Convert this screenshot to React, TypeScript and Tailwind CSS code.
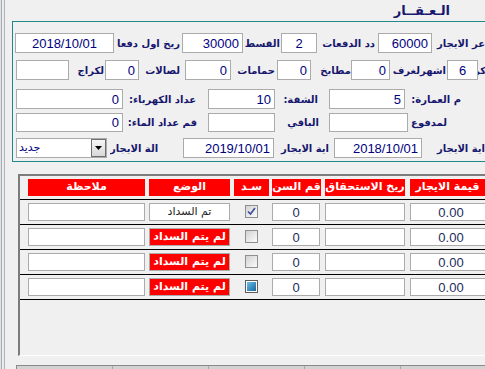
import React from "react";

type FieldProps = { className?: string; value?: string; align?: "right" | "center" };

const Field = ({ className = "", value = "", align = "right" }: FieldProps) => (
  <div
    className={`h-full shrink-0 bg-white border border-[#ababab] flex items-center text-[13px] leading-none text-[#000080] font-['Liberation_Sans',sans-serif] ${
      align === "center" ? "justify-center" : "justify-end pr-[3px]"
    } ${className}`}
  >
    {value}
  </div>
);

const Label = ({ className = "", text }: { className?: string; text: string }) => (
  <div
    dir="rtl"
    className={`h-full shrink-0 overflow-hidden whitespace-nowrap flex items-center text-[10px] font-bold text-[#17176e] font-['DejaVu_Sans',sans-serif] ${className}`}
  >
    {text}
  </div>
);

const Check = ({ kind }: { kind: "checked" | "empty" | "blue" }) => {
  if (kind === "blue") {
    return (
      <div className="w-[13px] h-[13px] border border-[#5c5c5c] bg-white p-px shrink-0">
        <div className="w-full h-full bg-linear-to-br from-[#6cc0ee] to-[#17679c]" />
      </div>
    );
  }
  return (
    <div className="w-[13px] h-[13px] border border-[#8e8f8f] bg-linear-to-br from-[#d2d2d2] to-[#fbfbfb] shrink-0 flex items-center justify-center">
      {kind === "checked" && (
        <svg width="9" height="9" viewBox="0 0 9 9">
          <path d="M1 4.5 L3.5 7 L8 1" fill="none" stroke="#3a4c9c" strokeWidth="1.6" />
        </svg>
      )}
    </div>
  );
};

const rows: { status: "paid" | "unpaid"; check: "checked" | "empty" | "blue" }[] = [
  { status: "paid", check: "checked" },
  { status: "unpaid", check: "empty" },
  { status: "unpaid", check: "empty" },
  { status: "unpaid", check: "blue" },
];

export default function App() {
  return (
    <div className="w-[485px] h-[369px] overflow-hidden bg-[#f0f0f0] flex font-['Liberation_Sans','DejaVu_Sans',sans-serif]">
      {/* left window edge */}
      <div className="flex h-full shrink-0">
        <div className="w-px bg-[#e2e2e2]" />
        <div className="w-px bg-[#a6aab6]" />
        <div className="w-[2px] bg-[#ececec]" />
        <div className="w-px bg-[#aeb2be]" />
      </div>

      <div className="flex-1 min-w-0 flex flex-col">
        {/* title */}
        <div className="h-[21px] shrink-0 flex items-center justify-end pr-[35px]">
          <span dir="rtl" className="text-[13px] font-bold text-[#17176e] font-['DejaVu_Sans',sans-serif] leading-none">
            الـعـقــار
          </span>
        </div>

        {/* group box */}
        <div className="h-[141px] shrink-0 ml-[7px] border-l border-y border-[#21898a] flex flex-col">
          <div className="flex h-[20px] mt-[11px] ml-[2px]">
            <Field className="w-[99px]" value="2018/10/01" align="center" />
            <Label className="w-[63px] ml-[3px]" text="ريخ اول دفعا" />
            <Field className="w-[61px] ml-[2px]" value="30000" />
            <Label className="w-[36px] ml-px" text="القسط" />
            <Field className="w-[36px] ml-px" value="2" align="center" />
            <Label className="w-[56px] ml-[2px]" text="دد الدفعات" />
            <Field className="w-[54px] ml-[3px]" value="60000" />
            <Label className="flex-1 min-w-0 ml-px" text="عر الايجار" />
          </div>

          <div className="flex h-[20px] mt-[7px] ml-[3px]">
            <Field className="w-[53px]" />
            <Label className="w-[31px] ml-[4px]" text="لكراج" />
            <Field className="w-[34px] ml-px" value="0" />
            <Label className="w-[37px] ml-[4px]" text="لصالات" />
            <Field className="w-[46px] ml-[5px]" value="0" />
            <Label className="w-[43px] ml-px" text="حمامات" />
            <Field className="w-[34px] ml-[2px]" value="0" />
            <Label className="w-[37px] ml-[3px]" text="مطابخ" />
            <Field className="w-[39px]" value="0" />
            <Label className="w-[53px] ml-[3px]" text="اشهرلغرف" />
            <Field className="w-[31px] ml-px" value="6" align="center" />
            <Label className="w-[8px]" text="كر" />
          </div>

          <div className="flex h-[20px] mt-[9px] ml-[3px]">
            <Field className="w-[107px]" value="0" />
            <Label className="w-[71px] ml-[2px]" text="عداد الكهرباء:" />
            <Field className="w-[67px] ml-[12px]" value="10" />
            <Label className="w-[40px] ml-[3px]" text="الشقة:" />
            <Field className="w-[76px] ml-[11px]" value="5" />
            <Label className="flex-1 min-w-0 pr-[24px]" text="م العمارة:" />
          </div>

          <div className="flex h-[19px] mt-[4px] ml-[3px]">
            <Field className="w-[107px]" value="0" />
            <Label className="w-[71px] ml-[3px]" text="قم عداد الماء:" />
            <Field className="w-[67px] ml-[11px]" />
            <Label className="w-[41px] ml-[3px]" text="الباقي" />
            <Field className="w-[79px] ml-[10px]" />
            <Label className="w-[36px] ml-[3px]" text="لمدفوع" />
          </div>

          <div className="flex h-[20px] mt-[6px] ml-[3px]">
            <div className="w-[91px] h-full shrink-0 bg-white border border-[#ababab] flex items-center justify-between">
              <span className="pl-[2px] text-[11px] text-[#000080] font-['DejaVu_Sans',sans-serif]">جديد</span>
              <div className="w-[15px] h-full border border-[#6f6f6f] bg-linear-to-b from-[#f6f6f6] to-[#d8d8d8] flex items-center justify-center">
                <svg width="7" height="4" viewBox="0 0 7 4">
                  <path d="M0 0 H7 L3.5 4 Z" fill="#000" />
                </svg>
              </div>
            </div>
            <Label className="w-[64px] ml-[3px] justify-end" text="الة الايجار" />
            <Field className="w-[91px] ml-[9px]" value="2019/10/01" />
            <Label className="w-[54px] ml-px" text="اية الايجار" />
            <Field className="w-[88px] ml-[5px]" value="2018/10/01" />
            <Label className="flex-1 min-w-0 ml-[3px]" text="اية الايجار" />
          </div>
        </div>

        {/* grid */}
        <div className="h-[182px] shrink-0 mt-[12px] ml-[13px] border-t-2 border-l-2 border-b border-[#7c7c7c] border-b-white flex flex-col">
          <div className="flex h-[17px] mt-[3px] pl-[8px] text-white text-[11px] font-bold font-['DejaVu_Sans',sans-serif]">
            {[
              ["w-[117px]", "ملاحظة"],
              ["w-[81px] ml-[4px]", "الوضع"],
              ["w-[35px] ml-[4px]", "سـد"],
              ["w-[49px] ml-[3px]", "قم السن"],
              ["w-[80px] ml-[4px]", "ريخ الاستحقاق"],
              ["w-[75px] ml-[5px]", "قيمة الايجار"],
            ].map(([cls, t]) => (
              <div key={t} dir="rtl" className={`${cls} shrink-0 h-full bg-[#ff0000] flex items-center justify-center overflow-hidden whitespace-nowrap`}>
                {t}
              </div>
            ))}
          </div>

          {rows.map((r, i) => (
            <div key={i} className="flex flex-col">
              <div className="h-px bg-black mt-[3px]" />
              <div className="flex items-center h-[18px] mt-[3px] pl-[8px]">
                <div className="w-[117px] h-full shrink-0 bg-white border border-[#ababab]" />
                {r.status === "paid" ? (
                  <div dir="rtl" className="w-[81px] ml-[4px] h-full shrink-0 bg-white border border-[#ababab] flex items-center justify-center text-[11px] text-[#222] font-['DejaVu_Sans',sans-serif]">
                    تم السداد
                  </div>
                ) : (
                  <div dir="rtl" className="w-[81px] ml-[4px] h-full shrink-0 bg-[#ff0000] border border-[#ababab] flex items-center justify-center text-[11px] font-bold text-white font-['DejaVu_Sans',sans-serif] whitespace-nowrap">
                    لم يتم السداد
                  </div>
                )}
                <div className="ml-[15px] self-start mt-[2px]">
                  <Check kind={r.check} />
                </div>
                <div className="w-[48px] ml-[14px] h-full shrink-0 bg-white border border-[#ababab] flex items-center justify-center text-[13px] text-[#1c2c5c] leading-none">
                  0
                </div>
                <div className="w-[80px] ml-[5px] h-full shrink-0 bg-white border border-[#ababab]" />
                <div className="w-[82px] ml-[5px] h-full shrink-0 bg-white border border-[#ababab] flex items-center justify-center text-[13px] text-[#1c2c5c] leading-none">
                  0.00
                </div>
              </div>
            </div>
          ))}
          <div className="h-px bg-black mt-[3px]" />
        </div>

        {/* bottom bar */}
        <div className="h-[10px] shrink-0 mt-[9px] ml-[11px] border-t border-l border-[#8a8a8a] bg-[#d2d2d2] flex">
          <div className="w-[96px] h-full border-r border-[#a8a8a8]" />
          <div className="w-[96px] h-full border-r border-[#a8a8a8]" />
          <div className="w-[96px] h-full border-r border-[#a8a8a8]" />
          <div className="w-[96px] h-full border-r border-[#a8a8a8]" />
          <div className="flex-1" />
        </div>
      </div>
    </div>
  );
}
